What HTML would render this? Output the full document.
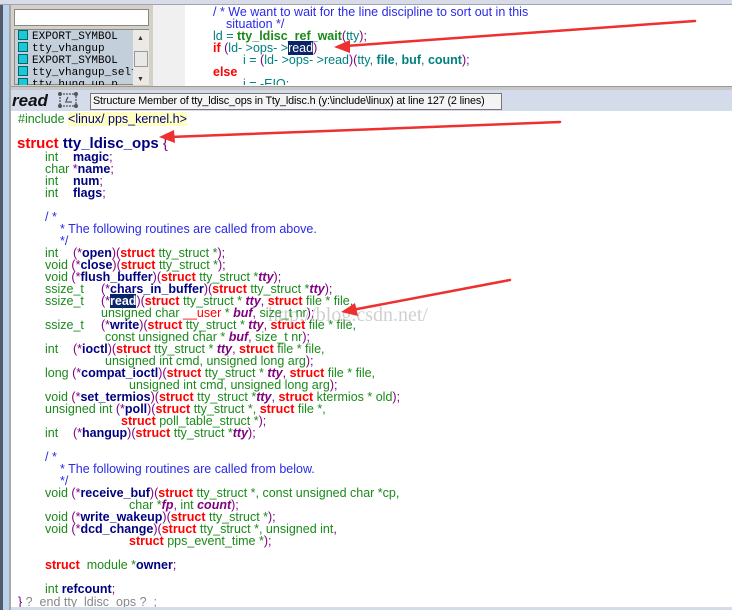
<!DOCTYPE html>
<html><head><meta charset="utf-8"><style>
*{margin:0;padding:0;box-sizing:border-box}
body{width:732px;height:610px;position:relative;overflow:hidden;background:#fff;font-family:"Liberation Sans",Tahoma,sans-serif;font-size:12.5px}
.a{position:absolute;white-space:pre;line-height:14px}
.g{color:#1a8a1a}.r{color:#f00;font-weight:bold}.n{color:#000080;font-weight:bold}.p{color:#800080}.pi{color:#800080;font-weight:bold;font-style:italic}.c{color:#2a2ae8}.t{color:#008080}
.hl{background:#0a246a;color:#fff}
.li{height:12px;line-height:12px;white-space:nowrap}
.ic{display:inline-block;width:10px;height:10px;background:#1cc8d8;border:1px solid #066;vertical-align:-1px;margin-right:4px}
</style></head><body>
<div style="position:absolute;left:0;top:0;width:732px;height:5px;background:#d8dce8;border-bottom:1px solid #a0a4b0"></div>
<div style="position:absolute;left:0;top:5px;width:3px;height:605px;background:#505a68"></div>
<div style="position:absolute;left:3px;top:5px;width:6px;height:605px;background:#b8d2ec"></div>
<div style="position:absolute;left:9px;top:5px;width:2px;height:605px;background:#a8a8a8"></div>
<div style="position:absolute;left:11px;top:5px;width:142px;height:81px;background:#d4d0c8"></div>
<div style="position:absolute;left:14px;top:9px;width:135px;height:17px;background:#fff;border:1px solid #888"></div>
<div style="position:absolute;left:14px;top:29px;width:135px;height:56px;background:#c4cfdc;border:1px solid #888"></div>
<div style="position:absolute;left:133px;top:30px;width:16px;height:55px;background:#ece9e4"></div>
<div style="position:absolute;left:134px;top:51px;width:14px;height:16px;background:#e8e8e8;border:1px solid #999"></div>
<div class="a" style="left:137px;top:32px;font-size:7px;color:#333">▲</div>
<div class="a" style="left:137px;top:73px;font-size:7px;color:#333">▼</div>
<div style="position:absolute;left:18px;top:30px;width:115px;height:55px;overflow:hidden;font-family:'Liberation Mono',monospace;font-size:11px;color:#000">
<div class="li"><span class="ic"></span>EXPORT_SYMBOL</div>
<div class="li"><span class="ic"></span>tty_vhangup</div>
<div class="li"><span class="ic"></span>EXPORT_SYMBOL</div>
<div class="li"><span class="ic"></span>tty_vhangup_self</div>
<div class="li"><span class="ic"></span>tty_hung_up_p</div>
</div>
<div style="position:absolute;left:153px;top:5px;width:32px;height:81px;background:#f0f0f0"></div>
<div class="a c" style="left:213px;top:5px">/ * We want to wait for the line discipline to sort out in this</div>
<div class="a c" style="left:226px;top:17px">situation */</div>
<div class="a" style="left:213px;top:29px"><span class="t">ld = </span><span style="color:#1a8a1a;font-weight:bold">tty_ldisc_ref_wait</span><span class="p">(</span><span class="t">tty</span><span class="p">);</span></div>
<div class="a" style="left:213px;top:41px"><span class="r">if</span> <span class="p">(</span><span class="t">ld- &gt;ops- &gt;</span><span class="hl">read</span><span class="p">)</span></div>
<div class="a" style="left:243px;top:53px"><span class="t">i = </span><span class="p">(</span><span class="t">ld- &gt;ops- &gt;read</span><span class="p">)(</span><span class="t">tty, <b>file</b>, <b>buf</b>, <b>count</b></span><span class="p">);</span></div>
<div class="a r" style="left:213px;top:65px">else</div>
<div class="a" style="left:243px;top:77px;height:8px;overflow:hidden"><span class="t">i = -EIO;</span></div>
<div style="position:absolute;left:11px;top:86px;width:721px;height:4px;background:#c8c8c8;border-top:1px solid #999"></div>
<div style="position:absolute;left:11px;top:90px;width:721px;height:21px;background:#d4dcec"></div>
<div class="a" style="left:12px;top:91px;font-size:17px;line-height:20px;font-weight:bold;font-style:italic;color:#111">read</div>
<svg style="position:absolute;left:56px;top:91px" width="24" height="18"><rect x="4" y="3" width="16" height="12" fill="none" stroke="#333" stroke-dasharray="2,1"/><circle cx="4" cy="3" r="2" fill="#555"/><circle cx="20" cy="3" r="2" fill="#555"/><circle cx="4" cy="15" r="2" fill="#555"/><circle cx="20" cy="15" r="2" fill="#555"/><path d="M9 11h7M12 6l-2 4" stroke="#333" fill="none"/></svg>
<div class="a" style="left:90px;top:93px;height:17px;width:412px;background:#f4f4f4;border:1px solid #777;padding-left:2px;line-height:15px;font-size:10.8px;letter-spacing:-0.15px;color:#000;overflow:hidden">Structure Member of tty_ldisc_ops in Tty_ldisc.h (y:\include\linux) at line 127 (2 lines)</div>
<div class="a" style="left:18px;top:112px"><span class="g">#include </span><span style="background:#ffffc0;color:#000080">&lt;linux/ pps_kernel.h&gt;</span></div>
<div class="a" style="left:17px;top:135px;font-size:15px;line-height:18px"><span class="r">struct</span> <span class="n">tty_ldisc_ops</span> <span class="p">{</span></div>
<div class="a" style="left:45px;top:150px"><span class="g">int</span></div><div class="a" style="left:73px;top:150px"><span class="n">magic</span><span class="p">;</span></div>
<div class="a" style="left:45px;top:162px"><span class="g">char </span><span class="p">*</span><span class="n">name</span><span class="p">;</span></div>
<div class="a" style="left:45px;top:174px"><span class="g">int</span></div><div class="a" style="left:73px;top:174px"><span class="n">num</span><span class="p">;</span></div>
<div class="a" style="left:45px;top:186px"><span class="g">int</span></div><div class="a" style="left:73px;top:186px"><span class="n">flags</span><span class="p">;</span></div>
<div class="a c" style="left:45px;top:210px">/ *</div>
<div class="a c" style="left:60px;top:222px">* The following routines are called from above.</div>
<div class="a c" style="left:60px;top:234px">*/</div>
<div class="a" style="left:45px;top:246px"><span class="g">int</span></div><div class="a" style="left:73px;top:246px"><span class="p">(*</span><span class="n">open</span><span class="p">)(</span><span class="r">struct</span> <span class="g">tty_struct *</span><span class="p">);</span></div>
<div class="a" style="left:45px;top:258px"><span class="g">void </span><span class="p">(*</span><span class="n">close</span><span class="p">)(</span><span class="r">struct</span> <span class="g">tty_struct *</span><span class="p">);</span></div>
<div class="a" style="left:45px;top:270px"><span class="g">void </span><span class="p">(*</span><span class="n">flush_buffer</span><span class="p">)(</span><span class="r">struct</span> <span class="g">tty_struct *</span><span class="pi">tty</span><span class="p">);</span></div>
<div class="a g" style="left:45px;top:282px">ssize_t</div><div class="a" style="left:101px;top:282px"><span class="p">(*</span><span class="n">chars_in_buffer</span><span class="p">)(</span><span class="r">struct</span> <span class="g">tty_struct *</span><span class="pi">tty</span><span class="p">);</span></div>
<div class="a g" style="left:45px;top:294px">ssize_t</div><div class="a" style="left:101px;top:294px"><span class="p">(*</span><span class="n hl">read</span><span class="p">)(</span><span class="r">struct</span> <span class="g">tty_struct * </span><span class="pi">tty</span><span class="p">, </span><span class="r">struct</span> <span class="g">file * file,</span></div>
<div class="a" style="left:101px;top:306px"><span class="g">unsigned char </span><span style="color:#f00">__user</span><span class="g"> * </span><span class="pi">buf</span><span class="p">, </span><span class="g">size_t nr</span><span class="p">);</span></div>
<div class="a g" style="left:45px;top:318px">ssize_t</div><div class="a" style="left:101px;top:318px"><span class="p">(*</span><span class="n">write</span><span class="p">)(</span><span class="r">struct</span> <span class="g">tty_struct * </span><span class="pi">tty</span><span class="p">, </span><span class="r">struct</span> <span class="g">file * file,</span></div>
<div class="a" style="left:105px;top:330px"><span class="g">const unsigned char * </span><span class="pi">buf</span><span class="p">, </span><span class="g">size_t nr</span><span class="p">);</span></div>
<div class="a g" style="left:45px;top:342px">int</div><div class="a" style="left:73px;top:342px"><span class="p">(*</span><span class="n">ioctl</span><span class="p">)(</span><span class="r">struct</span> <span class="g">tty_struct * </span><span class="pi">tty</span><span class="p">, </span><span class="r">struct</span> <span class="g">file * file,</span></div>
<div class="a" style="left:105px;top:354px"><span class="g">unsigned int cmd, unsigned long arg</span><span class="p">);</span></div>
<div class="a" style="left:45px;top:366px"><span class="g">long </span><span class="p">(*</span><span class="n">compat_ioctl</span><span class="p">)(</span><span class="r">struct</span> <span class="g">tty_struct * </span><span class="pi">tty</span><span class="p">, </span><span class="r">struct</span> <span class="g">file * file,</span></div>
<div class="a" style="left:129px;top:378px"><span class="g">unsigned int cmd, unsigned long arg</span><span class="p">);</span></div>
<div class="a" style="left:45px;top:390px"><span class="g">void </span><span class="p">(*</span><span class="n">set_termios</span><span class="p">)(</span><span class="r">struct</span> <span class="g">tty_struct *</span><span class="pi">tty</span><span class="p">, </span><span class="r">struct</span> <span class="g">ktermios * old</span><span class="p">);</span></div>
<div class="a" style="left:45px;top:402px"><span class="g">unsigned int </span><span class="p">(*</span><span class="n">poll</span><span class="p">)(</span><span class="r">struct</span> <span class="g">tty_struct *, </span><span class="r">struct</span> <span class="g">file *,</span></div>
<div class="a" style="left:121px;top:414px"><span class="r">struct</span> <span class="g">poll_table_struct *</span><span class="p">);</span></div>
<div class="a g" style="left:45px;top:426px">int</div><div class="a" style="left:73px;top:426px"><span class="p">(*</span><span class="n">hangup</span><span class="p">)(</span><span class="r">struct</span> <span class="g">tty_struct *</span><span class="pi">tty</span><span class="p">);</span></div>
<div class="a c" style="left:45px;top:450px">/ *</div>
<div class="a c" style="left:60px;top:462px">* The following routines are called from below.</div>
<div class="a c" style="left:60px;top:474px">*/</div>
<div class="a" style="left:45px;top:486px"><span class="g">void </span><span class="p">(*</span><span class="n">receive_buf</span><span class="p">)(</span><span class="r">struct</span> <span class="g">tty_struct *, const unsigned char *cp,</span></div>
<div class="a" style="left:129px;top:498px"><span class="g">char *</span><span class="pi">fp</span><span class="p">, </span><span class="g">int </span><span class="pi">count</span><span class="p">);</span></div>
<div class="a" style="left:45px;top:510px"><span class="g">void </span><span class="p">(*</span><span class="n">write_wakeup</span><span class="p">)(</span><span class="r">struct</span> <span class="g">tty_struct *</span><span class="p">);</span></div>
<div class="a" style="left:45px;top:522px"><span class="g">void </span><span class="p">(*</span><span class="n">dcd_change</span><span class="p">)(</span><span class="r">struct</span> <span class="g">tty_struct *, unsigned int</span><span class="p">,</span></div>
<div class="a" style="left:129px;top:534px"><span class="r">struct</span> <span class="g">pps_event_time *</span><span class="p">);</span></div>
<div class="a" style="left:45px;top:558px"><span class="r">struct</span>  <span class="g">module *</span><span class="n">owner</span><span class="p">;</span></div>
<div class="a" style="left:45px;top:582px"><span class="g">int </span><span class="n">refcount</span><span class="p">;</span></div>
<div class="a" style="left:18px;top:595px"><span class="p">}</span><span style="color:#888"> ?  end tty_ldisc_ops ?  ;</span></div>
<div style="position:absolute;left:11px;top:607px;width:721px;height:3px;background:#d4dcec"></div>
<div class="a" style="left:268px;top:305px;font-family:'Liberation Serif',serif;font-size:20px;line-height:20px;color:rgba(150,150,150,0.45)">http://blog.csdn.net/</div>
<svg style="position:absolute;left:0;top:0" width="732" height="610">
<g stroke="#ee3030" fill="#ee3030" stroke-linecap="round">
<line x1="695" y1="21" x2="345" y2="46" stroke-width="2.5"/>
<polygon points="334,47 350,40 350,53" stroke="none"/>
<line x1="560" y1="122" x2="170" y2="137" stroke-width="2.5"/>
<polygon points="159,137 174,130 175,143" stroke="none"/>
<line x1="510" y1="280" x2="352" y2="310" stroke-width="2.5"/>
<polygon points="341,312 355,303 358,316" stroke="none"/>
</g></svg>
</body></html>
